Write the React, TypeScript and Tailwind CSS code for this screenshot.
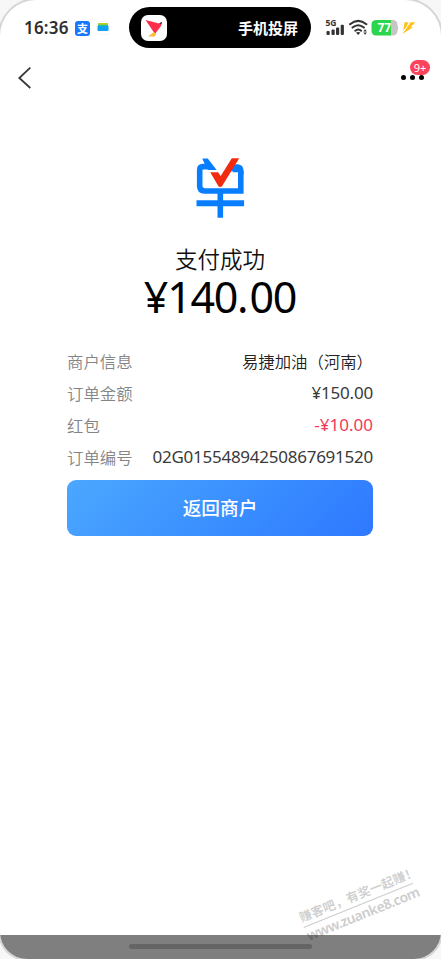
import { ReactNode } from 'react';

const FONT = "font-['Noto_Sans','Noto_Sans_CJK_SC',sans-serif]";
const CJK = "font-['Noto_Sans_CJK_SC',sans-serif]";

function StatusBar() {
  return (
    <div className="flex h-[48px] items-start">
      <div className="ml-[24px] mt-[16px] flex h-[24px] w-[105px] items-center">
        <span className="w-[51px] text-[17px] leading-[24px] font-semibold tracking-[0.2px] text-[#2e2e2e]">16:36</span>
        <span className={`flex h-[15px] w-[15px] items-center justify-center rounded-[3px] bg-[#1677ff] text-[11px] leading-none font-bold text-white ${CJK}`}>
          支
        </span>
        <svg className="ml-[6px] h-[14px] w-[14px]" viewBox="0 0 14 14">
          <rect x="0.5" y="0.5" width="13" height="13" rx="2" fill="#fefefe" stroke="#f3f3f3" strokeWidth="0.7" />
          <path d="M2 2h10v3H2z" fill="#b9cf28" />
          <path d="M2 3.8h10v3H2z" fill="#27bd9b" />
          <path d="M1.5 5h4l1 .7 1-.7h5v4a1 1 0 0 1-1 1h-9a1 1 0 0 1-1-1z" fill="#0da2f5" />
        </svg>
      </div>

      <div className="mt-[7px] flex h-[41px] w-[182px] items-center justify-between rounded-full bg-black pr-[13px] pl-[12px]">
        <svg className="h-[26px] w-[26px]" viewBox="0 0 26 26">
          <rect width="26" height="26" rx="7" fill="#fff" />
          <path d="M4.5 5 18 8.5 21 7l-1 4-6 8z" fill="#fb2f49" />
          <path d="M18 8.2 21 7l-.6 2.2z" fill="#333" />
          <path d="m13 17 2 2-1 2.5H7z" fill="#fdbb3b" />
        </svg>
        <span className={`text-[15px] leading-[22px] font-bold text-white ${CJK}`}>手机投屏</span>
      </div>

      <svg className="ml-[14px] mt-[17px] h-[22px] w-[92px]" viewBox="325 17 92 22">
        <text x="325.5" y="26" fontSize="8" fontWeight="700" fill="#333" textLength="11" lengthAdjust="spacingAndGlyphs">5G</text>
        <g fill="#333">
          <rect x="326.5" y="31" width="3.2" height="4" rx="1" />
          <rect x="331.5" y="29.5" width="3.2" height="5.5" rx="1" />
          <rect x="336" y="27.5" width="3.2" height="7.5" rx="1" />
          <rect x="340.7" y="24.7" width="3.2" height="10.3" rx="1" />
        </g>
        <g fill="none" stroke="#333" strokeWidth="2" strokeLinecap="round">
          <path d="M350 24.2q8.2-6.7 16.4 0" />
          <path d="M352.5 27.6q5.7-4.8 11.4 0" />
          <path d="M355.2 30.7q3-2.5 6 0" />
        </g>
        <path d="m356 32.6 2.2 2.5 2.2-2.5q-2.2-1.4-4.4 0z" fill="#333" />
        <path d="m363.3 31.6 1.8-2.3 1.8 2.3zm0 .9 1.8 2.3 1.8-2.3z" fill="#333" />
        <path d="M376 20h15v15.5h-15a4.5 4.5 0 0 1-4.5-4.5v-6.5a4.5 4.5 0 0 1 4.5-4.5z" fill="#2bd54c" />
        <path d="M391 20h2a4.5 4.5 0 0 1 4.5 4.5q1.3 3.3 0 6.5a4.5 4.5 0 0 1-4.5 4.5h-2z" fill="#c6c6c8" />
        <text x="377.5" y="32.3" fontSize="12" fontWeight="700" fill="#fff" textLength="13.5" lengthAdjust="spacingAndGlyphs">77</text>
        <path d="M404.5 22.2h4l-2 4.6-3.3 4z" fill="#ffc21a" />
        <path d="M410.5 22.2h4.800l-4.800 5h2.700L402.300 34l4-5.500z" fill="#ffc21a" />
      </svg>
    </div>
  );
}

function NavBar() {
  return (
    <div className="flex h-[56px] justify-between">
      <svg className="ml-[17px] mt-[18px] h-[24px] w-[15px]" viewBox="0 0 15 24" fill="none" stroke="#383838" strokeWidth="1.8">
        <path d="M13.3 1.7 2.3 12l11 10" />
      </svg>
      <div className="relative mr-[17px] mt-[27px] flex h-[5px] w-[23px] justify-between">
        <span className="h-[5px] w-[5px] rounded-full bg-black" />
        <span className="h-[5px] w-[5px] rounded-full bg-black" />
        <span className="h-[5px] w-[5px] rounded-full bg-black" />
        <span className="absolute top-[-15px] left-[9px] flex h-[15px] w-[20px] items-center justify-center rounded-full bg-[#fc435c] text-[11px] leading-none text-white">
          9+
        </span>
      </div>
    </div>
  );
}

function OrderLogo() {
  return (
    <svg className="h-[60px] w-[50px]" viewBox="195 158 50 60">
      <g fill="none" stroke="#087eff" strokeWidth="5.6">
        <path d="M208 166.6h-5q-3.3 0-3.3 3.3v16.2q0 4.9 4.9 4.9h36.2v-18.5q0-3-3-3h-5" />
        <path d="M196.500 203.2h47.600" strokeWidth="6" />
        <path d="M220.300 191v26.800" />
      </g>
      <path d="M202.300 158.400h5.500l8.800 11.700h-8.500l-2.500-4z" fill="#087eff" />
      <path d="M234 164.300h4q5.600.5 5.600 7v3H238v-3h-8z" fill="#087eff" />
      <path d="M231.800 158.300h7.400L222 186.300q-1.800 1.400-3.600 0L210.300 172.300h7.700l2.700 3.700z" fill="#f22b10" />
    </svg>
  );
}

interface RowProps {
  label: string;
  children: ReactNode;
  className?: string;
}

function Row({ label, children, className = 'text-[#3a3a3a]' }: RowProps) {
  return (
    <div className="flex h-8 items-center justify-between whitespace-nowrap">
      <span className={`text-[16.4px] leading-[31px] font-[350] text-[#858585] ${CJK}`}>{label}</span>
      <span className={`leading-8 ${className}`}>{children}</span>
    </div>
  );
}

function Watermark() {
  return (
    <div className="absolute top-[886px] left-[299px] w-[118px] rotate-[-22deg] font-bold whitespace-nowrap text-black/20">
      <div className={`h-[20px] border-b border-black/20 text-[12.6px] leading-[18px] ${CJK}`}>赚客吧，有奖一起赚！</div>
      <div className="text-[14px] leading-[17px] tracking-[-0.75px]">www.zuanke8.com</div>
    </div>
  );
}

export default function App() {
  return (
    <div className={`relative h-[959px] w-[441px] overflow-hidden bg-[#f7f7f7] ${FONT}`}>
      <div className="flex h-full flex-col overflow-hidden rounded-t-[36px] rounded-b-[27px] bg-white shadow-[0_0_0_2px_#d6d6d6]">
        <StatusBar />
        <NavBar />

        <main className="flex w-[440px] flex-1 flex-col items-center">
          <div className="mt-[54px]">
            <OrderLogo />
          </div>
          <h1 className={`mt-[25px] h-[32px] text-[22.5px] leading-[30px] font-[350] text-[#111] ${CJK}`}>支付成功</h1>
          <div className="h-[48px] text-[43px] leading-[43px] tracking-[-1.3px] text-black">
            ¥140<span className="tracking-[1px]">.</span>00
          </div>

          <div className="mt-[22px] w-[306px]">
            <Row label="商户信息" className={`text-[16.4px] leading-[31px] font-[350] text-[#222] ${CJK}`}>易捷加油（河南）</Row>
            <Row label="订单金额" className="text-[17px] tracking-[-0.2px] text-[#3a3a3a]">¥150.00</Row>
            <Row label="红包" className="text-[17px] text-[#f23a59]">-¥10.00</Row>
            <Row label="订单编号" className="text-[17px] tracking-[-0.25px] text-[#3a3a3a]">02G01554894250867691520</Row>
          </div>
          <button className={`mt-[7px] h-[56px] w-[306px] rounded-[9px] bg-linear-135 from-[#4ba7ff] to-[#2f78ff] pb-[2px] text-[18.7px] font-medium text-white ${CJK}`}>
            返回商户
          </button>
        </main>

        <footer className="flex h-[24px] justify-center bg-[#7f7f7f] pt-[9px]">
          <div className="h-[5px] w-[183px] rounded-full bg-[#656565]" />
        </footer>
      </div>
      <Watermark />
    </div>
  );
}
